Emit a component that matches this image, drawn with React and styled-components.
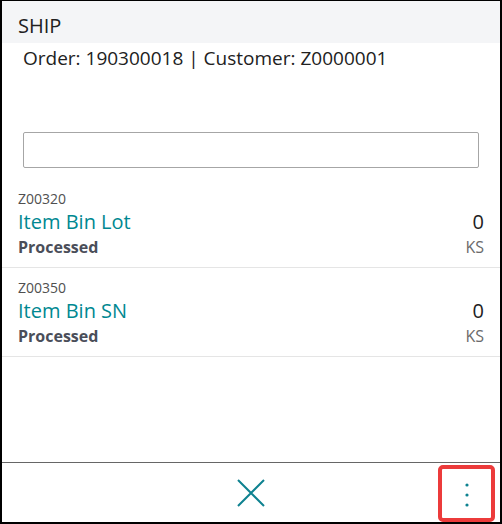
import React from "react";
import styled, { createGlobalStyle } from "styled-components";

const GlobalStyle = createGlobalStyle`
  html, body {
    margin: 0;
    padding: 0;
    background: #ffffff;
  }
  body {
    font-family: "Open Sans", "Noto Sans", sans-serif;
  }
  * {
    box-sizing: border-box;
  }
`;

const Frame = styled.div`
  display: flex;
  flex-direction: column;
  height: 100vh;
  border: 2px solid #000;
  border-top-width: 1px;
  background: #fff;
`;

const Header = styled.div`
  height: 42px;
  background: #f4f5f7;
  padding: 0 16px 3px;
  display: flex;
  align-items: flex-end;
  font-size: 20px;
  color: #212121;
  line-height: 28px;
`;

const SubTitle = styled.div`
  padding: 2px 21px 0;
  font-size: 19px;
  line-height: 26px;
  color: #212121;
`;

const SearchBox = styled.input`
  display: block;
  margin: 61px 21px 0;
  height: 36px;
  width: calc(100% - 42px);
  border: 1px solid #a6a6a6;
  border-radius: 2px;
  outline: none;
  font-size: 16px;
  padding: 0 8px;
`;

const List = styled.div`
  flex: 1;
  margin-top: 11px;
`;

const Row = styled.div`
  display: flex;
  justify-content: space-between;
  align-items: flex-end;
  padding: 10px 16px 8px;
  border-bottom: 1px solid #e5e5e5;
`;

const RowMain = styled.div`
  display: flex;
  flex-direction: column;
`;

const RowSide = styled.div`
  display: flex;
  flex-direction: column;
  align-items: flex-end;
`;

const Code = styled.div`
  font-size: 14px;
  line-height: 20px;
  color: #505050;
`;

const Name = styled.div`
  font-size: 20px;
  line-height: 26px;
  color: #008891;
`;

const Status = styled.div`
  font-size: 16px;
  line-height: 24px;
  font-weight: 700;
  color: #4a4e59;
`;

const Qty = styled.div`
  font-size: 20px;
  line-height: 26px;
  color: #212121;
`;

const Unit = styled.div`
  font-size: 16px;
  line-height: 24px;
  color: #6b6b6b;
`;

const Footer = styled.div`
  height: 60px;
  border-top: 1px solid #666;
  display: grid;
  grid-template-columns: 1fr auto 1fr;
  align-items: center;
`;

const CloseButton = styled.button`
  grid-column: 2;
  width: 40px;
  height: 40px;
  border: none;
  background: none;
  padding: 0;
  display: flex;
  align-items: center;
  justify-content: center;
  cursor: pointer;
`;

const MoreButton = styled.button`
  grid-column: 3;
  justify-self: end;
  margin-right: 5px;
  margin-top: 1px;
  width: 57px;
  height: 57px;
  border: 4px solid #ec3b3b;
  border-radius: 5px;
  background: #fff;
  display: flex;
  align-items: center;
  justify-content: center;
  padding: 0;
  padding-top: 3px;
  cursor: pointer;
`;

const items = [
  { code: "Z00320", name: "Item Bin Lot", status: "Processed", qty: 0, unit: "KS" },
  { code: "Z00350", name: "Item Bin SN", status: "Processed", qty: 0, unit: "KS" },
];

export default function App() {
  return (
    <>
      <GlobalStyle />
      <Frame>
        <Header>SHIP</Header>
        <SubTitle>Order: 190300018 | Customer: Z0000001</SubTitle>
        <SearchBox type="text" />
        <List>
          {items.map((item) => (
            <Row key={item.code}>
              <RowMain>
                <Code>{item.code}</Code>
                <Name>{item.name}</Name>
                <Status>{item.status}</Status>
              </RowMain>
              <RowSide>
                <Qty>{item.qty}</Qty>
                <Unit>{item.unit}</Unit>
              </RowSide>
            </Row>
          ))}
        </List>
        <Footer>
          <CloseButton aria-label="Close">
            <svg width="28" height="28" viewBox="0 0 28 28">
              <path d="M1 1 L27 27 M27 1 L1 27" stroke="#0e8290" strokeWidth="2" fill="none" />
            </svg>
          </CloseButton>
          <MoreButton aria-label="More">
            <svg width="6" height="26" viewBox="0 0 6 26">
              <circle cx="3" cy="3" r="1.6" fill="#0e8290" />
              <circle cx="3" cy="13" r="1.6" fill="#0e8290" />
              <circle cx="3" cy="23" r="1.6" fill="#0e8290" />
            </svg>
          </MoreButton>
        </Footer>
      </Frame>
    </>
  );
}
